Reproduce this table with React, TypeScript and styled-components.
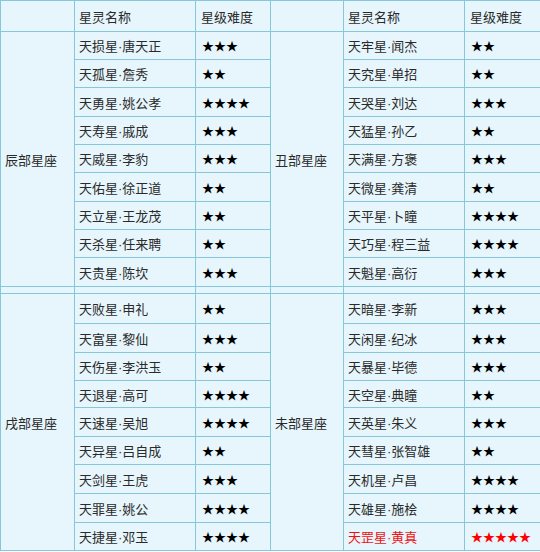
import React from "react"
import styled, { createGlobalStyle } from "styled-components"

const GlobalStyle = createGlobalStyle`
  html, body {
    margin: 0;
    padding: 0;
    background: #ffffff;
  }
`

type Spirit = { name: string; stars: number; hot?: boolean }
type Group = { zone: string; heights: number[]; spirits: Spirit[] }

const LINE = "#86c8d9"

const StyledTable = styled.table`
  width: 540px;
  table-layout: fixed;
  border-collapse: collapse;
  background: #e7f6fc;
  font-family: "Liberation Sans", "Noto Sans CJK SC", sans-serif;
  font-size: 13px;
  color: #2a2a2a;

  td {
    border: 1px solid ${LINE};
    padding: 0;
    vertical-align: middle;
    white-space: nowrap;
    overflow: hidden;
  }
`

const HeadRow = styled.tr`
  height: 31px;
`

const BodyRow = styled.tr<{ $h: number }>`
  height: ${({ $h }) => $h}px;
`

const SpacerRow = styled.tr`
  height: 7px;
`

const ZoneCell = styled.td`
  padding-left: 4px !important;
`

const NameCell = styled.td<{ $hot?: boolean }>`
  padding-left: 4px !important;
  color: ${({ $hot }) => ($hot ? "#ee1111" : "#2a2a2a")};
`

const HeadStarCell = styled.td`
  padding-left: 5px !important;
`

const StarCell = styled.td<{ $hot?: boolean }>`
  padding-left: 6px !important;
  font-family: "Noto Sans CJK SC", sans-serif;
  font-size: 12px;
  color: ${({ $hot }) => ($hot ? "#ff0000" : "#000")};
`

const groups: Group[][] = [
  [
    {
      zone: "辰部星座",
      heights: [28, 28, 29, 28, 28, 29, 28, 28, 29],
      spirits: [
        { name: "天损星·唐天正", stars: 3 },
        { name: "天孤星·詹秀", stars: 2 },
        { name: "天勇星·姚公孝", stars: 4 },
        { name: "天寿星·戚成", stars: 3 },
        { name: "天威星·李豹", stars: 3 },
        { name: "天佑星·徐正道", stars: 2 },
        { name: "天立星·王龙茂", stars: 2 },
        { name: "天杀星·任来聘", stars: 2 },
        { name: "天贵星·陈坎", stars: 3 },
      ],
    },
    {
      zone: "丑部星座",
      heights: [],
      spirits: [
        { name: "天牢星·闻杰", stars: 2 },
        { name: "天究星·单招", stars: 2 },
        { name: "天哭星·刘达", stars: 3 },
        { name: "天猛星·孙乙", stars: 2 },
        { name: "天满星·方褒", stars: 3 },
        { name: "天微星·龚清", stars: 2 },
        { name: "天平星·卜瞳", stars: 4 },
        { name: "天巧星·程三益", stars: 4 },
        { name: "天魁星·高衍", stars: 3 },
      ],
    },
  ],
  [
    {
      zone: "戌部星座",
      heights: [30, 29, 28, 27, 29, 28, 29, 29, 28],
      spirits: [
        { name: "天败星·申礼", stars: 2 },
        { name: "天富星·黎仙", stars: 3 },
        { name: "天伤星·李洪玉", stars: 2 },
        { name: "天退星·高可", stars: 4 },
        { name: "天速星·吴旭", stars: 4 },
        { name: "天异星·吕自成", stars: 2 },
        { name: "天剑星·王虎", stars: 3 },
        { name: "天罪星·姚公", stars: 4 },
        { name: "天捷星·邓玉", stars: 4 },
      ],
    },
    {
      zone: "未部星座",
      heights: [],
      spirits: [
        { name: "天暗星·李新", stars: 3 },
        { name: "天闲星·纪冰", stars: 3 },
        { name: "天暴星·毕德", stars: 3 },
        { name: "天空星·典瞳", stars: 2 },
        { name: "天英星·朱义", stars: 3 },
        { name: "天彗星·张智雄", stars: 2 },
        { name: "天机星·卢昌", stars: 4 },
        { name: "天雄星·施桧", stars: 4 },
        { name: "天罡星·黄真", stars: 5, hot: true },
      ],
    },
  ],
]

const star = (n: number) => "★".repeat(n)

const Block: React.FC<{ pair: Group[] }> = ({ pair }) => {
  const [left, right] = pair
  return (
    <>
      {left.spirits.map((s, i) => {
        const r = right.spirits[i]
        return (
          <BodyRow key={s.name} $h={left.heights[i]}>
            {i === 0 && <ZoneCell rowSpan={9}>{left.zone}</ZoneCell>}
            <NameCell>{s.name}</NameCell>
            <StarCell>{star(s.stars)}</StarCell>
            {i === 0 && <ZoneCell rowSpan={9}>{right.zone}</ZoneCell>}
            <NameCell $hot={r.hot}>{r.name}</NameCell>
            <StarCell $hot={r.hot}>{star(r.stars)}</StarCell>
          </BodyRow>
        )
      })}
    </>
  )
}

export default function App() {
  return (
    <>
      <GlobalStyle />
      <StyledTable>
        <colgroup>
          <col style={{ width: 74 }} />
          <col style={{ width: 121 }} />
          <col style={{ width: 75 }} />
          <col style={{ width: 73 }} />
          <col style={{ width: 121 }} />
          <col style={{ width: 76 }} />
        </colgroup>
        <tbody>
          <HeadRow>
            <ZoneCell />
            <NameCell>星灵名称</NameCell>
            <HeadStarCell>星级难度</HeadStarCell>
            <ZoneCell />
            <NameCell>星灵名称</NameCell>
            <HeadStarCell>星级难度</HeadStarCell>
          </HeadRow>
          <Block pair={groups[0]} />
          <SpacerRow>
            <td />
            <td />
            <td />
            <td />
            <td />
            <td />
          </SpacerRow>
          <Block pair={groups[1]} />
        </tbody>
      </StyledTable>
    </>
  )
}
